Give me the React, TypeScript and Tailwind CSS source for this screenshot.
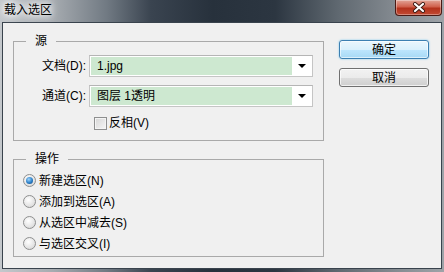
import React from 'react'

function Combo({ value }: { value: string }) {
  return (
    <div className="flex h-[22px] w-[224px] border border-[#c5c5c5] border-t-[#b5b5b5] bg-white p-[1px]">
      <div className="flex flex-1 items-center bg-[#cde8d0] pl-[6px] text-black">{value}</div>
      <div className="flex w-[19px] items-center justify-center">
        <div className="h-0 w-0 border-x-[4px] border-t-[4px] border-x-transparent border-t-black" />
      </div>
    </div>
  )
}

function Radio({ label, checked }: { label: string; checked?: boolean }) {
  return (
    <div className="flex h-[21px] items-center pl-[9px]">
      <div className="flex h-[13px] w-[13px] items-center justify-center rounded-full border border-[#8e8f8f] bg-[radial-gradient(circle_at_40%_35%,#ffffff,#e4e4e4_60%,#cfcfcf)]">
        {checked && (
          <div className="h-[7px] w-[7px] rounded-full bg-[radial-gradient(circle_at_40%_35%,#9fd4fb,#2a7fc8_55%,#0f3f74)]" />
        )}
      </div>
      <span className="ml-[3px]">{label}</span>
    </div>
  )
}

export default function App() {
  return (
    <div className="flex h-[272px] w-[444px] flex-col overflow-hidden bg-[linear-gradient(90deg,#c4c8cc_0%,#a6abb0_12%,#717a83_24%,#3a4450_34%,#27313c_48%,#2c3641_62%,#5f6870_76%,#878d93_90%,#9ea3a8_100%)] px-[2px] pb-[3px] font-['Liberation_Sans','Noto_Sans_CJK_SC',sans-serif] text-[12px] leading-[16px] text-black">
      {/* title bar */}
      <div className="relative h-[22px] shrink-0">
        <span className="absolute left-[2px] top-[2px] text-black [text-shadow:0_0_6px_#fff,0_0_8px_#fff,0_0_10px_#fff]">
          载入选区
        </span>
        <div className="absolute right-[0px] top-0 flex h-[16px] w-[47px] items-center justify-center rounded-b-[4px] border border-t-0 border-[#4a1a14] bg-[linear-gradient(180deg,#e2a597_0%,#d0604c_45%,#b3321c_55%,#c24a33_100%)] shadow-[inset_0_0_0_1px_rgba(255,255,255,0.35)]">
          <svg width="14" height="11" viewBox="0 0 14 11">
            <path d="M3 2 L11 9 M11 2 L3 9" stroke="#3b1a14" strokeWidth="4" strokeLinecap="round" />
            <path d="M3 2 L11 9 M11 2 L3 9" stroke="#ffffff" strokeWidth="2.2" strokeLinecap="round" />
          </svg>
        </div>
      </div>

      {/* client area */}
      <div className="flex flex-1 border border-[#39434d] bg-[#f0f0f0]">
        <div className="flex w-[321px] flex-col pl-[10px] pt-[10px]">
          <fieldset className="w-[311px] border border-[#a9a9a9] pb-[9px]">
            <legend className="ml-[12px] px-[9px]">源</legend>
            <div className="mt-[6px] flex items-center">
              <span className="w-[75px] pr-[3px] text-right">文档(D):</span>
              <Combo value="1.jpg" />
            </div>
            <div className="mt-[8px] flex items-center">
              <span className="w-[75px] pr-[3px] text-right">通道(C):</span>
              <Combo value="图层 1透明" />
            </div>
            <div className="mt-[8px] flex items-center pl-[80px]">
              <div className="h-[13px] w-[13px] border border-[#8e8f8f] bg-[linear-gradient(135deg,#d6d6d6,#f6f6f6)] shadow-[inset_0_0_0_1px_#f4f4f4]" />
              <span className="ml-[2px]">反相(V)</span>
            </div>
          </fieldset>

          <fieldset className="mt-[10px] w-[311px] border border-[#a9a9a9] pb-[2px]">
            <legend className="ml-[12px] px-[9px]">操作</legend>
            <div className="mt-[3px] flex flex-col">
              <Radio label="新建选区(N)" checked />
              <Radio label="添加到选区(A)" />
              <Radio label="从选区中减去(S)" />
              <Radio label="与选区交叉(I)" />
            </div>
          </fieldset>
        </div>

        <div className="flex flex-col pl-[15px] pt-[17px]">
          <div className="flex h-[19px] w-[90px] items-center justify-center rounded-[3px] border border-[#3c7fb1] bg-[linear-gradient(180deg,#eaf6fd_0%,#d9f0fc_50%,#bee6fd_51%,#a7d9f5_100%)] shadow-[0_0_2px_#6ec4f0,inset_0_0_0_1px_rgba(255,255,255,0.6)]">
            确定
          </div>
          <div className="mt-[9px] flex h-[19px] w-[90px] items-center justify-center rounded-[3px] border border-[#707070] bg-[linear-gradient(180deg,#f2f2f2_0%,#ebebeb_50%,#dddddd_51%,#cfcfcf_100%)] shadow-[inset_0_0_0_1px_rgba(255,255,255,0.7)]">
            取消
          </div>
        </div>
      </div>
    </div>
  )
}
